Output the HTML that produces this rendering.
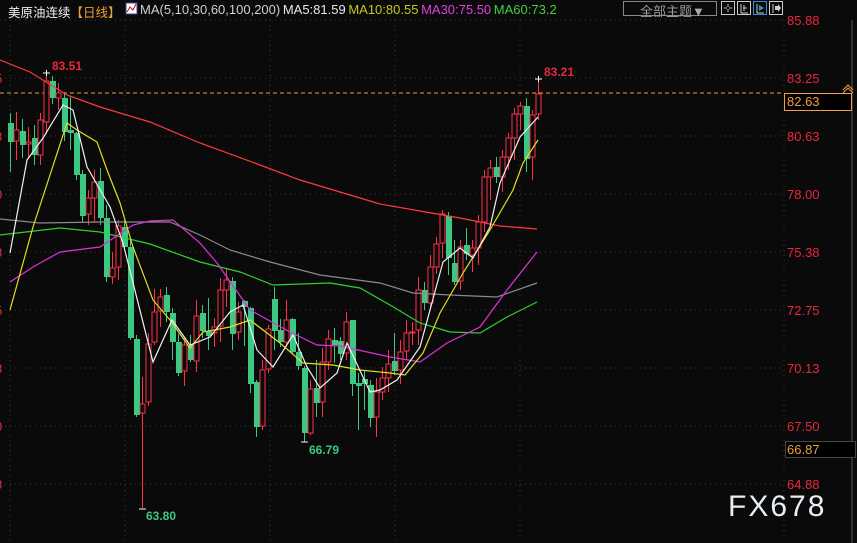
<!DOCTYPE html>
<html><head><meta charset="utf-8">
<style>
body{margin:0;background:#0a0a0a;width:857px;height:543px;overflow:hidden;position:relative;font-family:"Liberation Sans","Noto Sans CJK SC",sans-serif}
.t{position:absolute;white-space:nowrap}
.ax{position:absolute;left:787px;color:#e8283c;font-size:13px}
.lx{position:absolute;left:-5px;color:#e8283c;font-size:13px}
</style></head><body>
<svg id="c" width="857" height="543" style="position:absolute;left:0;top:0">
<g stroke="#3a3a3a" stroke-dasharray="1 4">
<line x1="0" y1="20" x2="784" y2="20"/><line x1="0" y1="78" x2="784" y2="78"/><line x1="0" y1="136" x2="784" y2="136"/><line x1="0" y1="194" x2="784" y2="194"/><line x1="0" y1="252" x2="784" y2="252"/><line x1="0" y1="310" x2="784" y2="310"/><line x1="0" y1="368" x2="784" y2="368"/><line x1="0" y1="426" x2="784" y2="426"/><line x1="0" y1="484" x2="784" y2="484"/>
<line x1="10" y1="20" x2="10" y2="543"/><line x1="125" y1="20" x2="125" y2="543"/><line x1="270" y1="20" x2="270" y2="543"/><line x1="395" y1="20" x2="395" y2="543"/><line x1="520" y1="20" x2="520" y2="543"/><line x1="784" y1="20" x2="784" y2="543"/>
</g>
<line x1="852" y1="20" x2="852" y2="543" stroke="#555"/>
<line x1="0" y1="93" x2="784" y2="93" stroke="#f0a040" stroke-dasharray="4 3"/>
<g id="cd"></g>
<g fill="none" stroke-width="1.2">
<polyline stroke="#ff3a3a" points="0,60 30,72 67,95 100,107 150,122 200,143 260,165 300,180 340,192 380,204 420,211 460,218 500,226 537,229"/>
<polyline stroke="#8a8a8a" points="0,219 40,223 100,222 170,222 200,235 230,250 270,262 320,275 380,283 413,293 450,295 497,297 537,283"/>
<polyline stroke="#30d030" points="0,235 60,228 100,232 150,244 200,262 240,272 273,285 330,283 360,288 390,305 420,323 450,332 480,333 507,317 537,302"/>
<polyline stroke="#e030e0" points="10,282 33,267 60,252 100,247 133,225 150,221 173,220 200,243 217,263 250,310 290,332 317,345 340,346 390,357 420,362 447,343 480,327 507,290 537,252"/>
<polyline stroke="#e0e020" points="10,310 33,227 67,123 77,130 97,142 107,170 120,203 133,247 153,300 170,320 190,348 203,332 230,327 250,320 280,343 303,363 333,365 360,370 390,373 405,375 423,353 440,313 463,273 490,230 513,190 523,163 538,140"/>
<polyline stroke="#f0f0f0" points="10,253 27,160 43,138 63,105 73,110 87,167 110,207 123,243 153,362 172,320 190,345 210,337 230,312 243,305 257,350 273,367 293,335 307,367 320,388 337,373 347,343 370,392 380,390 397,380 420,347 443,262 460,248 473,258 490,227 500,183 520,137 538,117"/>
</g>
<g stroke="#fff"><line x1="43" y1="73" x2="50" y2="73"/><line x1="46.5" y1="70" x2="46.5" y2="76"/><line x1="139" y1="509" x2="146" y2="509"/><line x1="535" y1="79" x2="542" y2="79"/><line x1="538.5" y1="76" x2="538.5" y2="82"/><line x1="301" y1="442" x2="308" y2="442"/></g>
<rect x="784.5" y="93.5" width="67" height="17" fill="#000" stroke="#f0a040"/>
<rect x="785.5" y="441.5" width="70" height="16" fill="#000" stroke="#444"/>
<path d="M843 93 L848 88 L853 93 M843 90 L848 85 L853 90" stroke="#f0a040" fill="none"/>
<rect x="623.5" y="1.5" width="93" height="14" fill="none" stroke="#888"/>
<g fill="none" stroke="#ccc">
<rect x="721.5" y="1.5" width="13" height="13"/><rect x="737.5" y="1.5" width="13" height="13"/><rect x="753.5" y="1.5" width="13" height="13" stroke="#3a8ad8"/><rect x="769.5" y="1.5" width="13" height="13"/>
<path d="M728 4v3M728 9v3M724 8h3M729 8h3M741 4v9h7M744 5v6M743 8h4M757 4v9h7M773 4v9"/>
</g>
<path d="M759 5l5 3-5 3z" fill="#3a8ad8"/><path d="M775 6h3v-2l3 4-3 4v-2h-3z" fill="#ccc"/>
<rect x="126" y="3" width="11" height="11" fill="#fff" stroke="#448"/>
<path d="M127 12l3-5 3 3 3-6" stroke="#c03" fill="none"/>
</svg>
<script>
var d=[[10,123,142,113,172],[16,141,130,112,160],[22,131,145,119,158],[28,144,142,127,158],[34,138,155,125,165],[40,155,120,113,165],[46,122,81,73,134],[52,81,98,76,104],[58,98,93,83,110],[64,98,132,92,141],[70,130,133,97,150],[76,133,175,132,180],[82,174,216,170,222],[88,214,198,190,225],[94,198,182,170,223],[100,181,218,168,225],[106,218,277,205,282],[112,277,268,252,284],[118,267,226,220,280],[124,227,247,220,248],[130,247,338,240,340],[136,339,415,335,417],[142,413,404,377,508],[148,402,344,333,406],[154,342,312,289,345],[160,311,297,289,327],[166,295,312,287,322],[172,313,342,308,360],[178,342,373,334,376],[184,371,345,337,386],[190,345,360,335,362],[196,361,316,300,372],[202,313,331,305,338],[208,331,336,298,350],[214,333,327,318,347],[220,326,290,278,342],[226,290,280,268,307],[232,281,334,277,350],[238,332,312,302,340],[244,301,307,300,346],[250,308,384,307,393],[256,382,427,380,437],[262,426,370,360,430],[268,369,329,325,373],[274,299,331,287,350],[280,330,342,319,347],[286,342,320,300,347],[292,319,352,318,354],[298,352,366,333,370],[304,368,433,366,442],[310,433,389,380,435],[316,388,403,360,417],[322,402,362,348,417],[328,362,339,330,370],[334,340,345,328,363],[340,341,354,337,360],[346,353,322,312,360],[352,320,384,320,396],[358,383,386,373,430],[364,379,384,370,410],[370,385,418,380,427],[376,417,392,378,437],[382,392,378,367,400],[388,378,364,350,392],[394,361,371,333,375],[400,370,352,340,384],[406,351,333,320,360],[412,333,332,322,345],[418,330,290,277,345],[424,290,303,282,310],[430,303,267,255,310],[436,267,244,237,274],[442,243,214,210,258],[448,216,258,212,275],[454,263,282,240,285],[460,281,247,240,290],[466,245,254,228,260],[472,255,248,240,272],[478,248,222,215,265],[484,222,177,170,232],[490,177,168,160,200],[496,167,177,157,183],[502,177,157,150,192],[508,157,138,133,170],[514,138,114,108,160],[520,114,106,102,130],[526,106,159,98,172],[532,157,115,110,180],[538,114,94,80,120]];
var s='';d.forEach(function(a){var x=a[0],o=a[1],c=a[2],h=a[3],l=a[4];if(c<=o){s+='<line x1="'+(x+.5)+'" y1="'+h+'" x2="'+(x+.5)+'" y2="'+c+'" stroke="#ff3048"/><line x1="'+(x+.5)+'" y1="'+o+'" x2="'+(x+.5)+'" y2="'+l+'" stroke="#ff3048"/><rect x="'+(x-2)+'" y="'+c+'" width="5" height="'+Math.max(o-c,1)+'" fill="#0a0a0a" stroke="#ff3048"/>';}else{s+='<line x1="'+(x+.5)+'" y1="'+h+'" x2="'+(x+.5)+'" y2="'+l+'" stroke="#3cc882"/><rect x="'+(x-2)+'" y="'+o+'" width="6" height="'+Math.max(c-o,1)+'" fill="#3cc882"/>';}});
document.getElementById('cd').innerHTML=s;
</script>
<div class="t" style="left:8px;top:2px;font-size:12.5px;color:#f0f0f0">美原油连续<span style="color:#f0a030">【日线】</span></div>
<div class="t" style="left:140px;top:2px;font-size:13px;color:#d0d0d0;word-spacing:-1px">MA(5,10,30,60,100,200) <span style="color:#e8e8e8">MA5:81.59</span> <span style="color:#c8c820">MA10:80.55</span> <span style="color:#e040e0">MA30:75.50</span> <span style="color:#40d040">MA60:73.2</span></div>
<div class="t" style="left:640px;top:1px;font-size:13px;color:#999">全部主题<span style="color:#aaa">▼</span></div>
<div class="ax" style="top:13px">85.88</div><div class="ax" style="top:71px">83.25</div><div class="ax" style="top:129px">80.63</div><div class="ax" style="top:187px">78.00</div><div class="ax" style="top:245px">75.38</div><div class="ax" style="top:303px">72.75</div><div class="ax" style="top:361px">70.13</div><div class="ax" style="top:419px">67.50</div><div class="ax" style="top:477px">64.88</div>
<div class="lx" style="top:71px">5</div><div class="lx" style="top:129px">3</div><div class="lx" style="top:187px">0</div><div class="lx" style="top:245px">8</div><div class="lx" style="top:303px">5</div><div class="lx" style="top:361px">3</div><div class="lx" style="top:419px">0</div><div class="lx" style="top:477px">8</div>
<div class="t" style="left:787px;top:94px;font-size:13px;color:#f0a040">82.63</div>
<div class="t" style="left:787px;top:442px;font-size:13px;color:#e8a040">66.87</div>
<div class="t" style="left:52px;top:59px;font-size:12px;font-weight:bold;color:#e8283c">83.51</div>
<div class="t" style="left:544px;top:65px;font-size:12px;font-weight:bold;color:#e8283c">83.21</div>
<div class="t" style="left:146px;top:509px;font-size:12px;font-weight:bold;color:#3cc882">63.80</div>
<div class="t" style="left:309px;top:443px;font-size:12px;font-weight:bold;color:#3cc882">66.79</div>
<div class="t" style="left:728px;top:490px;font-size:30px;color:#e8eef4;letter-spacing:2px">FX678</div>
</body></html>
